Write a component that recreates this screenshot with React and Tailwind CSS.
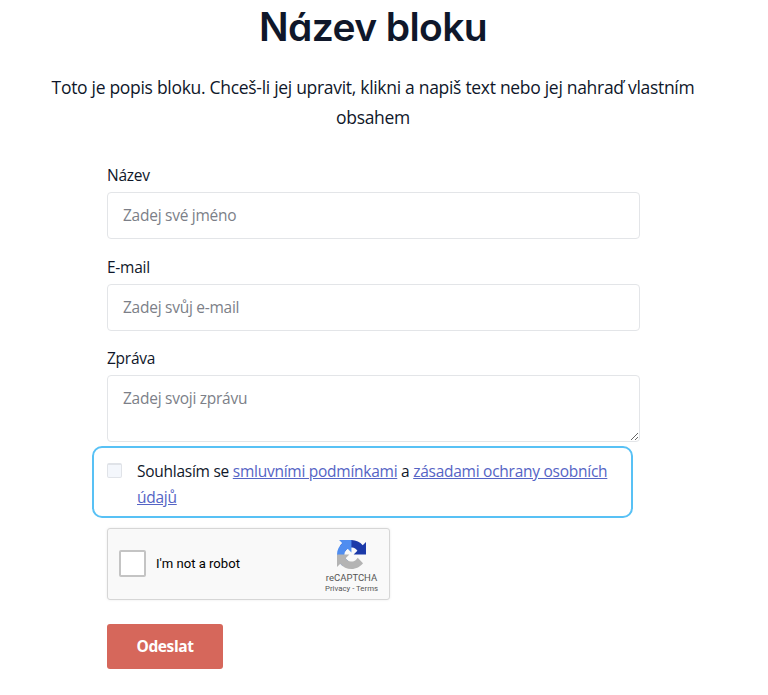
import React from 'react';

const Field = ({ label, placeholder }) => (
  <div className="mb-[15px]">
    <label className="block h-[30px] leading-[26px] text-[#0f172a]">{label}</label>
    <input
      type="text"
      placeholder={placeholder}
      className="block w-full h-[47px] px-[15px] pb-[2px] border border-[#e3e5e8] rounded-[4px] bg-white tracking-[-0.26px] placeholder:text-[#7c7f88] outline-none"
    />
  </div>
);

const RecaptchaLogo = () => (
  <svg viewBox="0 0 64 64" className="w-[29px] h-[29px]">
    <path
      fill="#1c3aa9"
      d="M64 31.955l-.033-1.37V4.687l-7.16 7.16C50.948 4.674 42.033.093 32.05.093c-10.4 0-19.622 4.96-25.458 12.64l11.736 11.86a15.55 15.55 0 0 1 4.754-5.334c2.05-1.6 4.952-2.906 8.968-2.906.485 0 .86.057 1.135.163 4.976.393 9.288 3.14 11.828 7.124l-8.307 8.307L64 31.953"
    />
    <path
      fill="#4f8df0"
      d="M31.862.094l-1.37.033H4.594l7.16 7.16C4.58 13.147 0 22.06 0 32.046c0 10.4 4.96 19.622 12.64 25.458L24.5 45.768a15.55 15.55 0 0 1-5.334-4.754c-1.6-2.05-2.906-4.952-2.906-8.968 0-.485.057-.86.163-1.135.393-4.976 3.14-9.288 7.124-11.828l8.307 8.307L31.86.095"
    />
    <path
      fill="#b4b4b4"
      d="M.001 32.045l.033 1.37v25.898l7.16-7.16c5.86 7.173 14.774 11.754 24.76 11.754 10.4 0 19.622-4.96 25.458-12.64l-11.736-11.86a15.55 15.55 0 0 1-4.754 5.334c-2.05 1.6-4.952 2.906-8.968 2.906-.485 0-.86-.057-1.135-.163-4.976-.393-9.288-3.14-11.828-7.124l8.307-8.307c-10.522.04-22.4.066-27.295-.005"
    />
  </svg>
);

const Recaptcha = () => (
  <div className="flex items-center w-[283px] h-[72px] mt-[10px] pl-[11px] pr-[11px] border border-[#d6d6d6] rounded-[3px] bg-[#f9f9f9] shadow-[0_0_3px_rgba(0,0,0,0.08)] font-['Roboto',sans-serif] tracking-normal">
    <div className="w-[27px] h-[27px] mb-[2px] border-2 border-[#c4c4c4] rounded-[2px] bg-white" />
    <span className="ml-[10px] text-[13.1px] leading-4 text-black">I'm not a robot</span>
    <div className="flex flex-col items-center ml-auto pt-[5px]">
      <RecaptchaLogo />
      <span className="mt-[3px] text-[9.5px] leading-[12px] text-[#555]">reCAPTCHA</span>
      <span className="text-[7.8px] leading-[10px] text-[#555]">Privacy - Terms</span>
    </div>
  </div>
);

const App = () => {
  return (
    <div className="w-[768px] h-[695px] overflow-hidden bg-white font-['Open_Sans',sans-serif] text-[15.5px] tracking-[-0.26px] text-[#0f172a]">
      <div className="w-[746px] text-center">
        <h1 className="h-[72px] pt-[3px] text-[39px] leading-[48px] font-semibold tracking-[-0.6px] font-['Inter',sans-serif] [font-feature-settings:'cv11']">
          Název bloku
        </h1>
        <p className="whitespace-nowrap text-[17.5px] leading-[30px] tracking-[-0.3px]">
          Toto je popis bloku. Chceš-li jej upravit, klikni a napiš text nebo jej nahraď vlastním
          <br />
          obsahem
        </p>
      </div>

      <form className="w-[533px] ml-[107px] mt-[30px]">
        <Field label="Název" placeholder="Zadej své jméno" />
        <Field label="E-mail" placeholder="Zadej svůj e-mail" />
        <label className="block h-[29px] leading-[25px]">Zpráva</label>
        <textarea
          placeholder="Zadej svoji zprávu"
          className="block w-full h-[67px] px-[15px] pt-[10px] leading-6 tracking-[-0.26px] border border-[#e3e5e8] rounded-[4px] bg-white placeholder:text-[#7c7f88] outline-none resize-y overflow-hidden"
        />

        {/* Highlighted consent row */}
        <div className="flex w-[541px] h-[72px] -ml-[15px] mt-[4px] pt-[9px] pl-[13px] border-2 border-[#58c1f5] rounded-[10px]">
          <span className="shrink-0 w-[15px] h-[15px] mt-[6px] border border-t-2 border-[#e0e3e8] rounded-[2px] bg-[#f4f7fc]" />
          <p className="ml-[15px] pt-px leading-[26px]">
            Souhlasím se{' '}
            <a href="#" className="text-[#5564c5] underline">smluvními podmínkami</a> a{' '}
            <a href="#" className="text-[#5564c5] underline">
              zásadami ochrany osobních
              <br />
              údajů
            </a>
          </p>
        </div>

        <Recaptcha />

        <button
          type="button"
          className="block w-[116px] h-[45px] mt-[24px] rounded-[3px] bg-[#d6675b] font-bold tracking-[-0.4px] text-white"
        >
          Odeslat
        </button>
      </form>
    </div>
  );
};

export default App;
